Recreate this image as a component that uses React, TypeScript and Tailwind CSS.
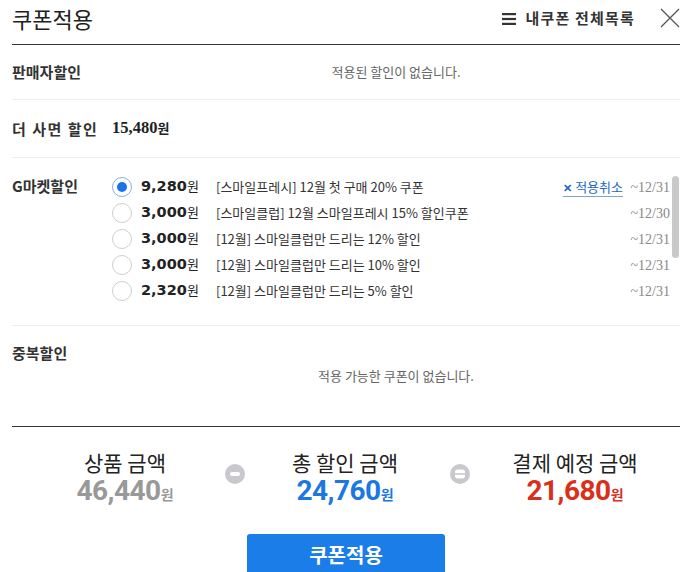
const coupons = [
  { amount: "9,280", desc: "[스마일프레시] 12월 첫 구매 20% 쿠폰", until: "~12/31", selected: true },
  { amount: "3,000", desc: "[스마일클럽] 12월 스마일프레시 15% 할인쿠폰", until: "~12/30", selected: false },
  { amount: "3,000", desc: "[12월] 스마일클럽만 드리는 12% 할인", until: "~12/31", selected: false },
  { amount: "3,000", desc: "[12월] 스마일클럽만 드리는 10% 할인", until: "~12/31", selected: false },
  { amount: "2,320", desc: "[12월] 스마일클럽만 드리는 5% 할인", until: "~12/31", selected: false },
]

function Radio({ checked }: { checked: boolean }) {
  return checked ? (
    <span className="flex h-[20px] w-[20px] shrink-0 items-center justify-center rounded-full border border-[#8aaedc] bg-white">
      <span className="h-[10px] w-[10px] rounded-full bg-[#1a73e8]" />
    </span>
  ) : (
    <span className="h-[20px] w-[20px] shrink-0 rounded-full border border-[#cfcfcf] bg-white" />
  )
}

function MinusIcon() {
  return (
    <svg width="20" height="20" viewBox="0 0 20 20">
      <circle cx="10" cy="10" r="10" fill="#c8c8cd" />
      <rect x="5" y="8" width="10" height="4" rx="2" fill="#fff" />
    </svg>
  )
}

function EqualsIcon() {
  return (
    <svg width="20" height="20" viewBox="0 0 20 20">
      <circle cx="10" cy="10" r="10" fill="#c8c8cd" />
      <rect x="5" y="5.5" width="10" height="9" rx="2.5" fill="#fff" />
      <rect x="5" y="9.25" width="10" height="1.5" fill="#c8c8cd" />
    </svg>
  )
}

export default function App() {
  return (
    <div className="h-[572px] w-[692px] overflow-hidden bg-white px-3 font-['Noto_Sans_CJK_KR',sans-serif] text-[#333]">
      {/* header */}
      <div className="flex h-[45px] items-center border-b border-[#333] pb-[8px]">
        <h1 className="text-[22px] leading-[28px] font-normal text-[#222]">쿠폰적용</h1>
        <div className="ml-auto flex items-center">
          <svg width="14" height="12" viewBox="0 0 14 12" className="mt-[2px]">
            <rect x="0" y="0" width="14" height="2.2" fill="#333" />
            <rect x="0" y="4.9" width="14" height="2.2" fill="#333" />
            <rect x="0" y="9.8" width="14" height="2.2" fill="#333" />
          </svg>
          <span className="ml-[9px] text-[15px] leading-[20px] font-bold tracking-[1.2px] text-[#333]">내쿠폰 전체목록</span>
          <button className="ml-[25px] -mt-[1px]">
            <svg width="20" height="20" viewBox="0 0 20 20">
              <path d="M1 1L19 19M19 1L1 19" stroke="#555" strokeWidth="1.3" fill="none" />
            </svg>
          </button>
        </div>
      </div>

      {/* 판매자할인 */}
      <div className="flex h-[55px] items-center border-b border-[#eee]">
        <div className="w-[100px] text-[15px] leading-[20px] font-bold">판매자할인</div>
        <div className="flex-1 text-center text-[13px] leading-[20px] text-[#666]">적용된 할인이 없습니다.</div>
      </div>

      {/* 더 사면 할인 */}
      <div className="flex h-[58px] items-center border-b border-[#eee]">
        <div className="w-[100px] text-[15px] leading-[20px] font-bold tracking-[1.5px]">더 사면 할인</div>
        <div className="flex items-baseline font-bold text-[#222]">
          <span className="font-['Liberation_Serif',serif] text-[16.5px]">15,480</span>
          <span className="text-[13px]">원</span>
        </div>
      </div>

      {/* G마켓할인 */}
      <div className="flex h-[168px] items-start border-b border-[#eee]">
        <div className="w-[100px] pt-[18px] text-[15px] leading-[20px] font-bold">G마켓할인</div>
        <div className="relative flex-1 pt-[16px]">
          {coupons.map((c, i) => (
            <div key={i} className="flex h-[26px] items-center pr-[10px]">
              <Radio checked={c.selected} />
              <div className="ml-[9px] flex w-[75px] items-baseline text-[#222]">
                <span className="font-['DejaVu_Sans',sans-serif] text-[14.5px] font-bold">{c.amount}</span>
                <span className="text-[13px]">원</span>
              </div>
              <div className="flex-1 truncate text-[13px] text-[#333]">{c.desc}</div>
              {c.selected && (
                <button className="mr-[7px] flex items-center border-b border-[#7fa5cc] text-[13px] leading-[18px] text-[#2067c4]">
                  <span className="mr-[3px] text-[11px] font-bold">✕</span>적용취소
                </button>
              )}
              <div className="w-[40px] text-right font-['Liberation_Serif',serif] text-[14px] text-[#888]">{c.until}</div>
            </div>
          ))}
          <div className="absolute top-[18px] right-[1px] h-[82px] w-[7px] rounded-full bg-[#c9c9c9]" />
        </div>
      </div>

      {/* 중복할인 */}
      <div className="flex h-[101px] items-start border-b border-[#333]">
        <div className="w-[100px] pt-[17px] text-[15px] leading-[20px] font-bold">중복할인</div>
        <div className="flex-1 pt-[40px] text-center text-[13px] leading-[20px] text-[#666]">적용 가능한 쿠폰이 없습니다.</div>
      </div>

      {/* summary */}
      <div className="flex items-start pt-[22px] pl-[33px]">
        <div className="w-[160px] text-center">
          <div className="text-[21px] leading-[26px] text-[#222]">상품 금액</div>
          <div className="mt-[1px] flex items-baseline justify-center leading-[30px] font-bold text-[#999]">
            <span className="font-['Roboto',sans-serif] text-[28px] tracking-[-0.5px]">46,440</span>
            <span className="text-[14px]">원</span>
          </div>
        </div>
        <div className="mx-[20px] mt-[15px]">
          <MinusIcon />
        </div>
        <div className="w-[160px] text-center">
          <div className="text-[21px] leading-[26px] text-[#222]">총 할인 금액</div>
          <div className="mt-[1px] flex items-baseline justify-center leading-[30px] font-bold text-[#1c78e0]">
            <span className="font-['Roboto',sans-serif] text-[28px] tracking-[-0.5px]">24,760</span>
            <span className="text-[14px]">원</span>
          </div>
        </div>
        <div className="mx-[25px] mt-[15px]">
          <EqualsIcon />
        </div>
        <div className="w-[160px] text-center">
          <div className="text-[21px] leading-[26px] text-[#222]">결제 예정 금액</div>
          <div className="mt-[1px] flex items-baseline justify-center leading-[30px] font-bold text-[#d8301a]">
            <span className="font-['Roboto',sans-serif] text-[28px] tracking-[-0.5px]">21,680</span>
            <span className="text-[14px]">원</span>
          </div>
        </div>
      </div>

      <button className="mx-auto mt-[25px] flex h-[41px] w-[198px] items-center justify-center rounded-t-[3px] bg-[#1a7de8] text-[20px] font-bold text-white">
        쿠폰적용
      </button>
    </div>
  )
}
